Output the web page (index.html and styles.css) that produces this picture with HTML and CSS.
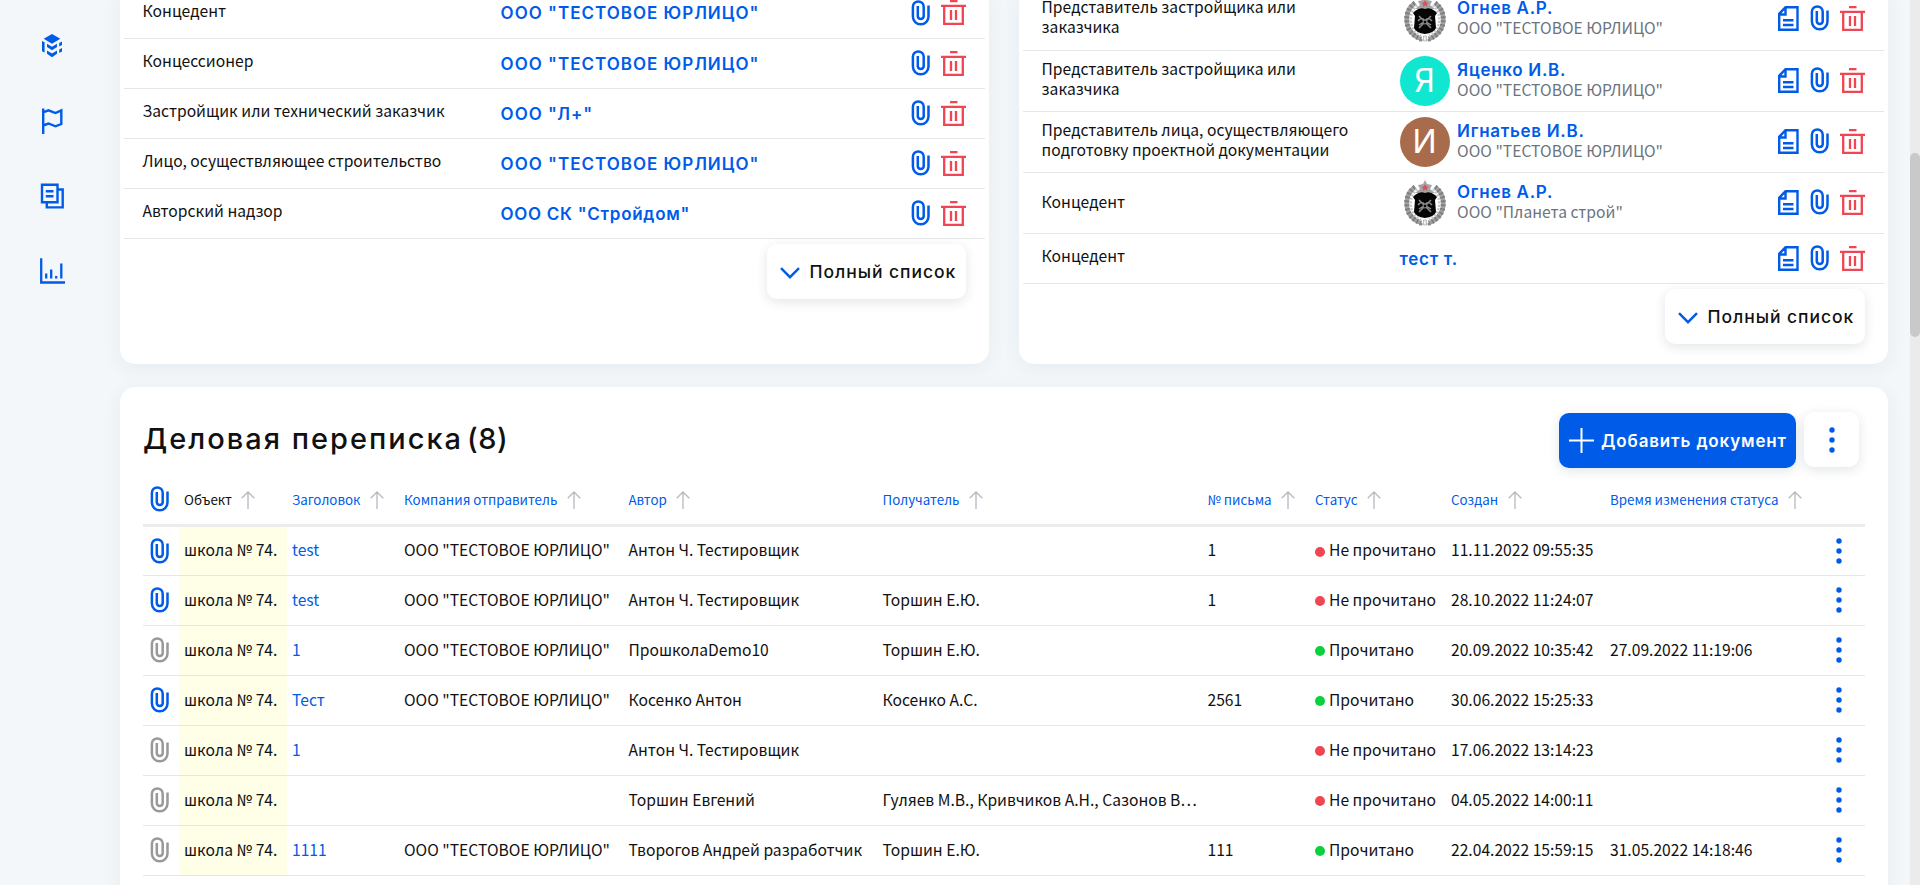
FILE: index.html
```
<!DOCTYPE html>
<html lang="ru">
<head>
<meta charset="utf-8">
<title>Деловая переписка</title>
<link rel="stylesheet" href="styles.css">
</head>
<body>
<svg class="sprite" aria-hidden="true">
  <symbol id="clip" viewBox="0 0 20 26"><path d="M17.500 5.500V16.500A7.800 7.800 0 0 1 1.900 16.500V6.800A5.300 5.300 0 0 1 12.700 6.800V16.500A3 3 0 0 1 6.800 16.500V6" fill="none" stroke="currentColor" stroke-width="2.500"/></symbol>
  <symbol id="trash" viewBox="0 0 25 25"><path d="M9 1H16.500M0 5.800H25M3.200 6V23.900H21.800V6M10 10V20M15 10V20" fill="none" stroke="currentColor" stroke-width="2.300"/></symbol>
  <symbol id="doc" viewBox="0 0 21 25"><path d="M7.500 1.200H19.500V23.800H1.200V7.800ZM7.500 1.200V8.500H1.200M5 14.200H15.500M5 19H15.500" fill="none" stroke="currentColor" stroke-width="2.400"/></symbol>
  <symbol id="arrow" viewBox="0 0 14 18"><path d="M7 18V1.500M.700 7.300L7 1L13.300 7.300" fill="none" stroke="currentColor" stroke-width="1.300"/></symbol>
  <symbol id="dots" viewBox="0 0 6 26"><circle cx="3" cy="3" r="2.700"/><circle cx="3" cy="13" r="2.700"/><circle cx="3" cy="23" r="2.700"/></symbol>
  <symbol id="chevron" viewBox="0 0 20 12"><path d="M1 1.200L10 10.200L19 1.200" fill="none" stroke="currentColor" stroke-width="2.400"/></symbol>
  <symbol id="emblem" viewBox="0 0 40 46">
    <path d="M10 7C3 12 1 19 2 27C3 34 8 40 16 43M30 7C37 12 39 19 38 27C37 34 32 40 24 43" fill="none" stroke="#a2a2a2" stroke-width="4.500"/>
    <path d="M10 7C3 12 1 19 2 27C3 34 8 40 16 43M30 7C37 12 39 19 38 27C37 34 32 40 24 43" fill="none" stroke="#808080" stroke-width="5" stroke-dasharray="2 2"/>
    <path d="M12 9C7 14 5 20 6 27C7 32 10 37 16 40M28 9C33 14 35 20 34 27C33 32 30 37 24 40" fill="none" stroke="#c8c8c8" stroke-width="2.500" stroke-dasharray="2 1.500"/>
    <path d="M20 0L22 4L27 5L25 9L30 13H10L15 9L13 5L18 4Z" fill="#a4a4a4"/>
    <path d="M20 4L21.200 6.500L23.500 6.500L21.700 8.500L22.500 11L20 9.500L17.500 11L18.300 8.500L16.500 6.500L18.800 6.500Z" fill="#d8505a"/>
    <path d="M10 15Q15 11 20 13Q25 11 30 15L32 17L30 20L31 32Q29 37 20 38Q11 37 9 32L10 20L8 17Z" fill="#050505"/>
    <path d="M14 20L26 32M26 20L14 32M13 25Q17 20 20 25Q23 20 27 25M14 29Q20 24 26 29" fill="none" stroke="#8a8a8a" stroke-width="1.500"/>
    <circle cx="20" cy="26" r="2" fill="#050505" stroke="#999"/>
    <path d="M18.500 40H21.500V45H18.500Z" fill="#eee" stroke="#999" stroke-width=".6"/><circle cx="16" cy="44" r="1.600" fill="#888"/><circle cx="24" cy="44" r="1.600" fill="#888"/>
  </symbol>
</svg>
<div class="page">
  <nav class="sidebar">
    <svg class="nav-icon" viewBox="0 0 26 26"><path d="M13 1L21.300 5.800L13 10.700L4.700 5.800Z" fill="currentColor"/><path d="M8 10.800L13 13.700L18 10.800V14L13 17.200L8 14ZM8 17.600L13 20.500L18 17.600V20.800L13 24.300L8 20.800Z" fill="currentColor"/><path d="M3 8L5.600 9.300V19.600L3 18.300ZM20.200 10L23 8.500V12L20.200 13.600ZM20.200 16.500L23 15V18.500L20.200 20.100Z" fill="currentColor"/></svg>
    <svg class="nav-icon" viewBox="0 0 26 26"><path d="M4.200 .5V26M4 4.300L9.500 2.300L16.500 5L22.300 2.300V16L16.500 18.300L9.500 15.500L4 17.500" fill="none" stroke="currentColor" stroke-width="2.400"/></svg>
    <svg class="nav-icon" viewBox="0 0 26 26"><path d="M3 1.700H18.500V19.200H3ZM18.500 6.500H23.700V24.400H7.800V19.200M6.800 8.200H14.500M6.800 13.200H14.500" fill="none" stroke="currentColor" stroke-width="2.400"/></svg>
    <svg class="nav-icon" viewBox="0 0 26 26"><path d="M2.200 .3V24.500H26M7.200 15.500V20.500M12.200 11.500V20.500M17.200 18V20.500M22.300 5.500V20.500" fill="none" stroke="currentColor" stroke-width="2.300"/></svg>
  </nav>
  <main class="content">
    <div class="cards">
      <section class="card">
        <div class="lrow"><div class="role">Концедент</div><div class="name firm">ООО "ТЕСТОВОЕ ЮРЛИЦО"</div><div class="acts"><svg class="clip"><use href="#clip"/></svg><svg class="trash"><use href="#trash"/></svg></div></div>
        <div class="lrow"><div class="role">Концессионер</div><div class="name firm">ООО "ТЕСТОВОЕ ЮРЛИЦО"</div><div class="acts"><svg class="clip"><use href="#clip"/></svg><svg class="trash"><use href="#trash"/></svg></div></div>
        <div class="lrow"><div class="role">Застройщик или технический заказчик</div><div class="name firm">ООО "Л+"</div><div class="acts"><svg class="clip"><use href="#clip"/></svg><svg class="trash"><use href="#trash"/></svg></div></div>
        <div class="lrow"><div class="role">Лицо, осуществляющее строительство</div><div class="name firm">ООО "ТЕСТОВОЕ ЮРЛИЦО"</div><div class="acts"><svg class="clip"><use href="#clip"/></svg><svg class="trash"><use href="#trash"/></svg></div></div>
        <div class="lrow"><div class="role">Авторский надзор</div><div class="name firm mixed">ООО СК "Стройдом"</div><div class="acts"><svg class="clip"><use href="#clip"/></svg><svg class="trash"><use href="#trash"/></svg></div></div>
        <button class="more"><svg class="chev"><use href="#chevron"/></svg><span>Полный список</span></button>
      </section>
      <section class="card">
        <div class="lrow tall"><div class="role">Представитель застройщика или<br>заказчика</div><div class="person"><svg class="avatar"><use href="#emblem"/></svg><div><div class="name">Огнев А.Р.</div><div class="org">ООО "ТЕСТОВОЕ ЮРЛИЦО"</div></div></div><div class="acts"><svg class="doc"><use href="#doc"/></svg><svg class="clip"><use href="#clip"/></svg><svg class="trash"><use href="#trash"/></svg></div></div>
        <div class="lrow tall"><div class="role">Представитель застройщика или<br>заказчика</div><div class="person"><div class="avatar teal">Я</div><div><div class="name">Яценко И.В.</div><div class="org">ООО "ТЕСТОВОЕ ЮРЛИЦО"</div></div></div><div class="acts"><svg class="doc"><use href="#doc"/></svg><svg class="clip"><use href="#clip"/></svg><svg class="trash"><use href="#trash"/></svg></div></div>
        <div class="lrow tall"><div class="role">Представитель лица, осуществляющего<br>подготовку проектной документации</div><div class="person"><div class="avatar brown">И</div><div><div class="name">Игнатьев И.В.</div><div class="org">ООО "ТЕСТОВОЕ ЮРЛИЦО"</div></div></div><div class="acts"><svg class="doc"><use href="#doc"/></svg><svg class="clip"><use href="#clip"/></svg><svg class="trash"><use href="#trash"/></svg></div></div>
        <div class="lrow tall"><div class="role single">Концедент</div><div class="person"><svg class="avatar"><use href="#emblem"/></svg><div><div class="name">Огнев А.Р.</div><div class="org">ООО "Планета строй"</div></div></div><div class="acts"><svg class="doc"><use href="#doc"/></svg><svg class="clip"><use href="#clip"/></svg><svg class="trash"><use href="#trash"/></svg></div></div>
        <div class="lrow"><div class="role">Концедент</div><div class="name">тест т.</div><div class="acts"><svg class="doc"><use href="#doc"/></svg><svg class="clip"><use href="#clip"/></svg><svg class="trash"><use href="#trash"/></svg></div></div>
        <button class="more"><svg class="chev"><use href="#chevron"/></svg><span>Полный список</span></button>
      </section>
    </div>
    <section class="card mail">
      <header class="mail-head">
        <h2><span>Деловая переписка</span><span class="count">(8)</span></h2>
        <button class="add"><svg class="plus" viewBox="0 0 25 25"><path d="M12.500 0V25M0 12.500H25" stroke="#fff" stroke-width="2"/></svg><span>Добавить документ</span></button>
        <button class="kebab"><svg class="dots"><use href="#dots"/></svg></button>
      </header>
      <div class="trow thead">
        <div class="att"><svg class="clip"><use href="#clip"/></svg></div>
        <div class="dark obj">Объект<svg class="arrow"><use href="#arrow"/></svg></div>
        <div>Заголовок<svg class="arrow"><use href="#arrow"/></svg></div>
        <div>Компания отправитель<svg class="arrow"><use href="#arrow"/></svg></div>
        <div>Автор<svg class="arrow"><use href="#arrow"/></svg></div>
        <div>Получатель<svg class="arrow"><use href="#arrow"/></svg></div>
        <div>№ письма<svg class="arrow"><use href="#arrow"/></svg></div>
        <div>Статус<svg class="arrow"><use href="#arrow"/></svg></div>
        <div>Создан<svg class="arrow"><use href="#arrow"/></svg></div>
        <div>Время изменения статуса<svg class="arrow"><use href="#arrow"/></svg></div>
      </div>
      <div class="trow"><div class="att"><svg class="clip"><use href="#clip"/></svg></div><div class="obj">школа № 74.</div><div class="link">test</div><div>ООО "ТЕСТОВОЕ ЮРЛИЦО"</div><div>Антон Ч. Тестировщик</div><div></div><div>1</div><div class="unread">Не прочитано</div><div>11.11.2022 09:55:35</div><div></div><div class="menu"><svg class="dots"><use href="#dots"/></svg></div></div>
      <div class="trow"><div class="att"><svg class="clip"><use href="#clip"/></svg></div><div class="obj">школа № 74.</div><div class="link">test</div><div>ООО "ТЕСТОВОЕ ЮРЛИЦО"</div><div>Антон Ч. Тестировщик</div><div>Торшин Е.Ю.</div><div>1</div><div class="unread">Не прочитано</div><div>28.10.2022 11:24:07</div><div></div><div class="menu"><svg class="dots"><use href="#dots"/></svg></div></div>
      <div class="trow"><div class="att none"><svg class="clip"><use href="#clip"/></svg></div><div class="obj">школа № 74.</div><div class="link">1</div><div>ООО "ТЕСТОВОЕ ЮРЛИЦО"</div><div>ПрошколаDemo10</div><div>Торшин Е.Ю.</div><div></div><div class="read">Прочитано</div><div>20.09.2022 10:35:42</div><div>27.09.2022 11:19:06</div><div class="menu"><svg class="dots"><use href="#dots"/></svg></div></div>
      <div class="trow"><div class="att"><svg class="clip"><use href="#clip"/></svg></div><div class="obj">школа № 74.</div><div class="link">Тест</div><div>ООО "ТЕСТОВОЕ ЮРЛИЦО"</div><div>Косенко Антон</div><div>Косенко А.С.</div><div>2561</div><div class="read">Прочитано</div><div>30.06.2022 15:25:33</div><div></div><div class="menu"><svg class="dots"><use href="#dots"/></svg></div></div>
      <div class="trow"><div class="att none"><svg class="clip"><use href="#clip"/></svg></div><div class="obj">школа № 74.</div><div class="link">1</div><div></div><div>Антон Ч. Тестировщик</div><div></div><div></div><div class="unread">Не прочитано</div><div>17.06.2022 13:14:23</div><div></div><div class="menu"><svg class="dots"><use href="#dots"/></svg></div></div>
      <div class="trow"><div class="att none"><svg class="clip"><use href="#clip"/></svg></div><div class="obj">школа № 74.</div><div></div><div></div><div>Торшин Евгений</div><div>Гуляев М.В., Кривчиков А.Н., Сазонов В…</div><div></div><div class="unread">Не прочитано</div><div>04.05.2022 14:00:11</div><div></div><div class="menu"><svg class="dots"><use href="#dots"/></svg></div></div>
      <div class="trow"><div class="att none"><svg class="clip"><use href="#clip"/></svg></div><div class="obj">школа № 74.</div><div class="link">1111</div><div>ООО "ТЕСТОВОЕ ЮРЛИЦО"</div><div>Творогов Андрей разработчик</div><div>Торшин Е.Ю.</div><div>111</div><div class="read">Прочитано</div><div>22.04.2022 15:59:15</div><div>31.05.2022 14:18:46</div><div class="menu"><svg class="dots"><use href="#dots"/></svg></div></div>
    </section>
  </main>
  <div class="scroll"><div class="thumb"></div></div>
</div>
</body>
</html>
```
FILE: styles.css
```
* { box-sizing: border-box; }
body {
  margin: 0;
  color: #111;
  font: 15.65px/20px "Noto Sans CJK SC", "Noto Sans", sans-serif;
}
button { border: 0; font: inherit; color: inherit; background: #fff; padding: 0; }
svg { display: block; flex: none; }
.sprite { position: absolute; width: 0; height: 0; }
.page {
  display: flex;
  width: 1920px;
  height: 885px;
  overflow: hidden;
  background: #f3f7fa;
}

.sidebar {
  width: 120px;
  flex: none;
  display: flex;
  flex-direction: column;
  gap: 49px;
  padding: 33px 0 0 39px;
  color: #005be8;
}
.nav-icon { width: 26px; height: 26px; }

.content { width: 1768px; flex: none; }
.cards {
  display: grid;
  grid-template-columns: 869px 869px;
  justify-content: space-between;
  height: 376px;
  margin-top: -12px;
}
.card {
  background: #fff;
  border-radius: 15px;
  box-shadow: 0 5px 20px rgba(20, 50, 70, .06);
}
.cards .card {
  display: flex;
  flex-direction: column;
  padding: 0 4px;
  border-radius: 0 0 15px 15px;
}
.lrow {
  height: 50px;
  flex: none;
  display: grid;
  grid-template-columns: 358px 1fr auto;
  align-items: center;
  padding: 0 19px 0 18.6px;
  border-bottom: 1px solid #e5e6e8;
  white-space: nowrap;
}
.cards .card:first-child .lrow:first-child { height: 51px; }
.lrow.tall { height: 61px; }
.lrow.tall:first-child { height: 63px; }
.role { padding-bottom: 5px; }
.single { padding-bottom: 3px; }
.name {
  color: #005be8;
  font: 600 17px/20px Inter, sans-serif;
  letter-spacing: .7px;
}
.firm { letter-spacing: 1px; }
.mixed { letter-spacing: .7px; }
.person { display: flex; align-items: center; gap: 7.500px; }
.person .org { color: #6b747c; line-height: 20px; }
.person > div:last-child { padding-bottom: 2px; }
.avatar {
  width: 50px;
  height: 50px;
  border-radius: 50%;
  color: #fff;
  font: 400 32px/50px Inter, sans-serif;
  text-align: center;
}
svg.avatar { height: 46px; border-radius: 0; }
.teal { background: #10e6d0; }
.brown { background: #a86c4c; }
.acts { display: flex; align-items: center; color: #005be8; padding-bottom: 1px; }
.tall .acts { padding-bottom: 2px; }
.clip { width: 20px; height: 26px; }
.doc { width: 21px; height: 25px; margin-right: 11px; }
.trash { width: 25px; height: 25px; margin-left: 10px; color: #f04552; }

.more {
  align-self: flex-end;
  display: flex;
  align-items: center;
  gap: 10px;
  width: 200px;
  height: 55px;
  margin: 5px 19px 0 0;
  padding-left: 12.500px;
  border-radius: 10px;
  box-shadow: 0 3px 12px rgba(20, 40, 60, .12);
  font: 500 17.500px/20px Inter, sans-serif;
  letter-spacing: .95px;
  white-space: nowrap;
}
.cards .card:first-child .more { width: 199px; }
.chev { width: 20px; height: 12px; color: #005be8; margin-top: 2px; }

.mail { margin-top: 23px; height: 560px; padding: 25px 23px 0; }
.mail-head { display: flex; }
h2 {
  flex: 1;
  margin: 7px 0 0;
  font: 500 29px/40px Inter, sans-serif;
  letter-spacing: 2px;
}
.count { margin-left: 4px; letter-spacing: .5px; }
.add {
  display: flex;
  align-items: center;
  gap: 7px;
  width: 237px;
  height: 55px;
  margin: 1px 8px 0 0;
  padding-left: 10px;
  border-radius: 10px;
  background: #005be8;
  color: #fff;
  box-shadow: 0 3px 12px rgba(20, 40, 60, .12);
  font: 600 17px/20px Inter, sans-serif;
  letter-spacing: .85px;
  white-space: nowrap;
}
.plus { width: 25px; height: 25px; }
.kebab {
  display: flex;
  align-items: center;
  justify-content: center;
  width: 55px;
  height: 55px;
  margin-right: 6px;
  border-radius: 10px;
  box-shadow: 0 3px 12px rgba(20, 40, 60, .12);
}
.dots { width: 6px; height: 26px; fill: #005be8; }

.trow {
  display: grid;
  grid-template-columns: 36px 113px 112px 224.5px 254px 325px 107.5px 136px 159px 225.5px 1fr;
  height: 50px;
  width: 1722px;
  border-bottom: 1px solid #e5e6e8;
  white-space: nowrap;
}
.trow > div { display: flex; align-items: center; padding-bottom: 2px; }
.trow .att, .trow .menu { padding-bottom: 1px; }
.thead + .trow { height: 49px; }
.trow.thead {
  height: 59px;
  border-bottom: 3px solid #ececec;
  font-size: 13.36px;
  color: #005be8;
}
.thead > div { padding: 8px 0 0; }
.trow.thead .att { padding-top: 6px; }
.arrow { width: 14px; height: 18px; margin-left: 9.500px; color: #b4bac2; }
.trow .att { padding-left: 7px; color: #005be8; }
.trow .none { color: #999; }
.trow .obj { padding-left: 5px; margin-right: 5px; background: #fffee6; }
.trow .dark { color: #111; background: none; }
.link { color: #005be8; }
.unread::before, .read::before {
  content: "";
  width: 10px;
  height: 10px;
  margin: 3px 4px 0 0;
  border-radius: 50%;
  background: #f04552;
}
.read::before { background: #0bd13c; }

.scroll { flex: none; width: 10px; margin-left: 22px; background: #ebebeb; padding-top: 153px; }
.thumb { height: 184px; border-radius: 5px; background: #c9c9c9; }
```
